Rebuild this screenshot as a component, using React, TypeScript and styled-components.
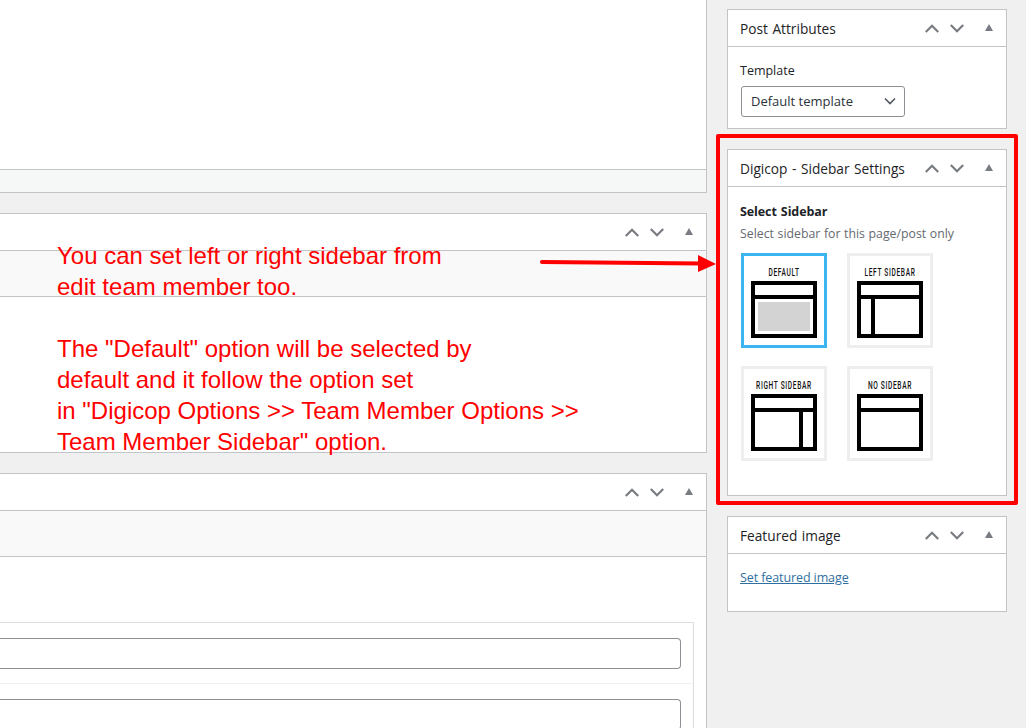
import React from 'react';
import styled, { createGlobalStyle } from 'styled-components';

const GlobalStyle = createGlobalStyle`
  html, body {
    margin: 0;
    height: 728px;
    overflow: hidden;
    background: #f0f0f1;
  }
  * {
    box-sizing: border-box;
  }
`;

type SidebarKind = 'default' | 'left' | 'right' | 'none';

const options: { kind: SidebarKind; label: string }[] = [
  { kind: 'default', label: 'DEFAULT' },
  { kind: 'left', label: 'LEFT SIDEBAR' },
  { kind: 'right', label: 'RIGHT SIDEBAR' },
  { kind: 'none', label: 'NO SIDEBAR' },
];

const HandleButtons = () => (
  <Handles>
    <svg width="14" height="9" viewBox="0 0 14 9">
      <path d="M0.8 8 L7 1.8 L13.2 8" fill="none" stroke="#787c82" strokeWidth="2.2" />
    </svg>
    <svg width="14" height="9" viewBox="0 0 14 9">
      <path d="M0.8 1 L7 7.2 L13.2 1" fill="none" stroke="#787c82" strokeWidth="2.2" />
    </svg>
    <TriangleIcon width="8" height="7" viewBox="0 0 8 7">
      <path d="M4 0 L8 7 L0 7 Z" fill="#787c82" />
    </TriangleIcon>
  </Handles>
);

const LayoutIcon = ({ kind }: { kind: SidebarKind }) => (
  <svg width="66" height="57" viewBox="0 0 66 57">
    <rect x="2" y="2" width="62" height="53" fill="#fff" stroke="#000" strokeWidth="4" />
    <rect x="0" y="14" width="66" height="4" fill="#000" />
    {kind === 'default' && <rect x="7" y="21" width="52" height="29" fill="#d3d3d3" />}
    {kind === 'left' && <rect x="14" y="16" width="4" height="40" fill="#000" />}
    {kind === 'right' && <rect x="48" y="16" width="4" height="40" fill="#000" />}
  </svg>
);

const App = () => {
  return (
    <>
      <GlobalStyle />
      <Page>
        <Main>
          <TopPanel>
            <TopPanelBody />
            <TopPanelFooter />
          </TopPanel>

          <Panel>
            <PanelHeader>
              <span />
              <HandleButtons />
            </PanelHeader>
            <Band />
            <PanelBody $height={155} />
          </Panel>

          <Panel>
            <PanelHeader>
              <span />
              <HandleButtons />
            </PanelHeader>
            <Band />
            <FieldsBody>
              <FieldsTable>
                <FieldRow>
                  <FakeInput />
                </FieldRow>
                <FieldRow>
                  <FakeInput />
                </FieldRow>
              </FieldsTable>
            </FieldsBody>
          </Panel>
        </Main>

        <Side>
          <Box>
            <PanelHeader>
              <BoxTitle>Post Attributes</BoxTitle>
              <HandleButtons />
            </PanelHeader>
            <AttributesBody>
              <FieldLabel>Template</FieldLabel>
              <SelectBox>
                Default template
                <svg width="12" height="8" viewBox="0 0 12 8">
                  <path d="M1 1.5 L6 6.5 L11 1.5" fill="none" stroke="#50575e" strokeWidth="1.6" />
                </svg>
              </SelectBox>
            </AttributesBody>
          </Box>

          <Box>
            <PanelHeader>
              <BoxTitle>Digicop - Sidebar Settings</BoxTitle>
              <HandleButtons />
            </PanelHeader>
            <SidebarBody>
              <SettingTitle>Select Sidebar</SettingTitle>
              <SettingHint>Select sidebar for this page/post only</SettingHint>
              <OptionGrid>
                {options.map((option) => (
                  <OptionCard key={option.kind} $selected={option.kind === 'default'}>
                    <OptionLabel>{option.label}</OptionLabel>
                    <LayoutIcon kind={option.kind} />
                  </OptionCard>
                ))}
              </OptionGrid>
            </SidebarBody>
          </Box>

          <Box>
            <PanelHeader>
              <BoxTitle>Featured image</BoxTitle>
              <HandleButtons />
            </PanelHeader>
            <FeaturedBody>
              <FeaturedLink href="#">Set featured image</FeaturedLink>
            </FeaturedBody>
          </Box>
        </Side>

        <Note>
          You can set left or right sidebar from
          <br />
          edit team member too.
          <br />
          <br />
          The "Default" option will be selected by
          <br />
          default and it follow the option set
          <br />
          in "Digicop Options &gt;&gt; Team Member Options &gt;&gt;
          <br />
          Team Member Sidebar" option.
        </Note>

        <Arrow width="180" height="20" viewBox="0 0 180 20">
          <path d="M3 7 L162 8.5" stroke="#f00" strokeWidth="4" strokeLinecap="round" fill="none" />
          <path d="M159 0 L177 9 L159 17 Z" fill="#f00" />
        </Arrow>

        <Highlight />
      </Page>
    </>
  );
};

// Page layout
const Page = styled.div`
  position: relative;
  width: 1026px;
  height: 728px;
  overflow: hidden;
  display: grid;
  grid-template-columns: 707px 280px;
  column-gap: 20px;
  align-items: start;
  font-family: 'Open Sans', 'Noto Sans', sans-serif;
  color: #1d2327;
`;

const Main = styled.div`
  display: flex;
  flex-direction: column;
  gap: 20px;
`;

const Side = styled.div`
  display: flex;
  flex-direction: column;
  gap: 20px;
  padding-top: 9px;
`;

// Left column panels
const Panel = styled.section`
  background: #fff;
  border: 1px solid #c3c4c7;
  border-left: none;
`;

const TopPanel = styled(Panel)`
  border-top: none;
`;

const TopPanelBody = styled.div`
  height: 169px;
`;

const TopPanelFooter = styled.div`
  height: 23px;
  background: #f6f7f7;
  border-top: 1px solid #c3c4c7;
`;

const PanelHeader = styled.header`
  height: 37px;
  display: flex;
  align-items: center;
  justify-content: space-between;
  padding: 0 13px 0 12px;
  border-bottom: 1px solid #c3c4c7;
`;

const Handles = styled.div`
  display: flex;
  align-items: center;
  gap: 11px;

  svg {
    display: block;
  }
`;

const TriangleIcon = styled.svg`
  margin-left: 10px;
  margin-top: -2px;
`;

const Band = styled.div`
  height: 46px;
  background: #f9f9f9;
  border-bottom: 1px solid #c3c4c7;
`;

const PanelBody = styled.div<{ $height: number }>`
  height: ${(p) => p.$height}px;
`;

const FieldsBody = styled.div`
  padding: 65px 12px 0 0;
`;

const FieldsTable = styled.div`
  border: 1px solid #dcdcde;
  border-left: none;
`;

const FieldRow = styled.div`
  padding: 15px 12px 14px 0;

  & + & {
    border-top: 1px solid #f0f0f1;
  }
`;

const FakeInput = styled.div`
  height: 31px;
  background: #fff;
  border: 1px solid #8c8f94;
  border-left: none;
  border-radius: 0 4px 4px 0;
`;

// Right column boxes
const Box = styled.section`
  background: #fff;
  border: 1px solid #c3c4c7;
`;

const BoxTitle = styled.h2`
  margin: 0;
  font-size: 13.7px;
  font-weight: 500;
  word-spacing: 1px;
  color: #1d2327;
`;

const AttributesBody = styled.div`
  height: 81px;
  padding: 15px 12px 0;
`;

const FieldLabel = styled.div`
  font-size: 12.5px;
  line-height: 17px;
  color: #1d2327;
  margin-bottom: 7px;
`;

const SelectBox = styled.div`
  width: 164px;
  height: 31px;
  margin-left: 1px;
  display: flex;
  align-items: center;
  justify-content: space-between;
  padding: 0 8px 2px 9px;
  font-size: 13px;
  color: #2c3338;
  border: 1px solid #8c8f94;
  border-radius: 3px;
`;

const SidebarBody = styled.div`
  height: 308px;
  padding: 16px 12px 0;
`;

const SettingTitle = styled.div`
  font-size: 12.5px;
  line-height: 17px;
  font-weight: 700;
  word-spacing: 1px;
  letter-spacing: -0.1px;
  color: #1d2327;
`;

const SettingHint = styled.div`
  margin-top: 5px;
  font-size: 12.3px;
  line-height: 17px;
  word-spacing: 0.4px;
  color: #646970;
`;

const OptionGrid = styled.div`
  margin: 11px 0 0 1px;
  display: grid;
  grid-template-columns: 86px 86px;
  column-gap: 20px;
  row-gap: 18px;
`;

const OptionCard = styled.div<{ $selected?: boolean }>`
  height: 95px;
  display: flex;
  flex-direction: column;
  align-items: center;
  padding-top: 25px;
  position: relative;
  border: 3px solid ${(p) => (p.$selected ? '#3bb5f0' : '#eeeeee')};
`;

const OptionLabel = styled.span`
  position: absolute;
  top: 11px;
  left: 50%;
  transform: translateX(-50%) scaleX(0.66);
  white-space: nowrap;
  font-family: 'Roboto', 'Liberation Sans', sans-serif;
  font-size: 10px;
  line-height: 11px;
  font-weight: 500;
  letter-spacing: 1px;
  color: #111;
`;

const FeaturedBody = styled.div`
  height: 57px;
  padding: 11px 12px 0;
`;

const FeaturedLink = styled.a`
  font-size: 12.5px;
  line-height: 17px;
  letter-spacing: -0.1px;
  color: #2f6f9f;
  text-decoration: underline;
`;

// Annotations drawn over the screenshot
const Note = styled.div`
  position: absolute;
  left: 57px;
  top: 240px;
  font-family: 'Liberation Sans', Arial, sans-serif;
  font-size: 24px;
  line-height: 31px;
  color: #f00;
  white-space: nowrap;
`;

const Arrow = styled.svg`
  position: absolute;
  left: 539px;
  top: 255px;
`;

const Highlight = styled.div`
  position: absolute;
  left: 716px;
  top: 134px;
  width: 302px;
  height: 371px;
  border: 4px solid #f00;
  border-radius: 2px;
`;

export default App;
